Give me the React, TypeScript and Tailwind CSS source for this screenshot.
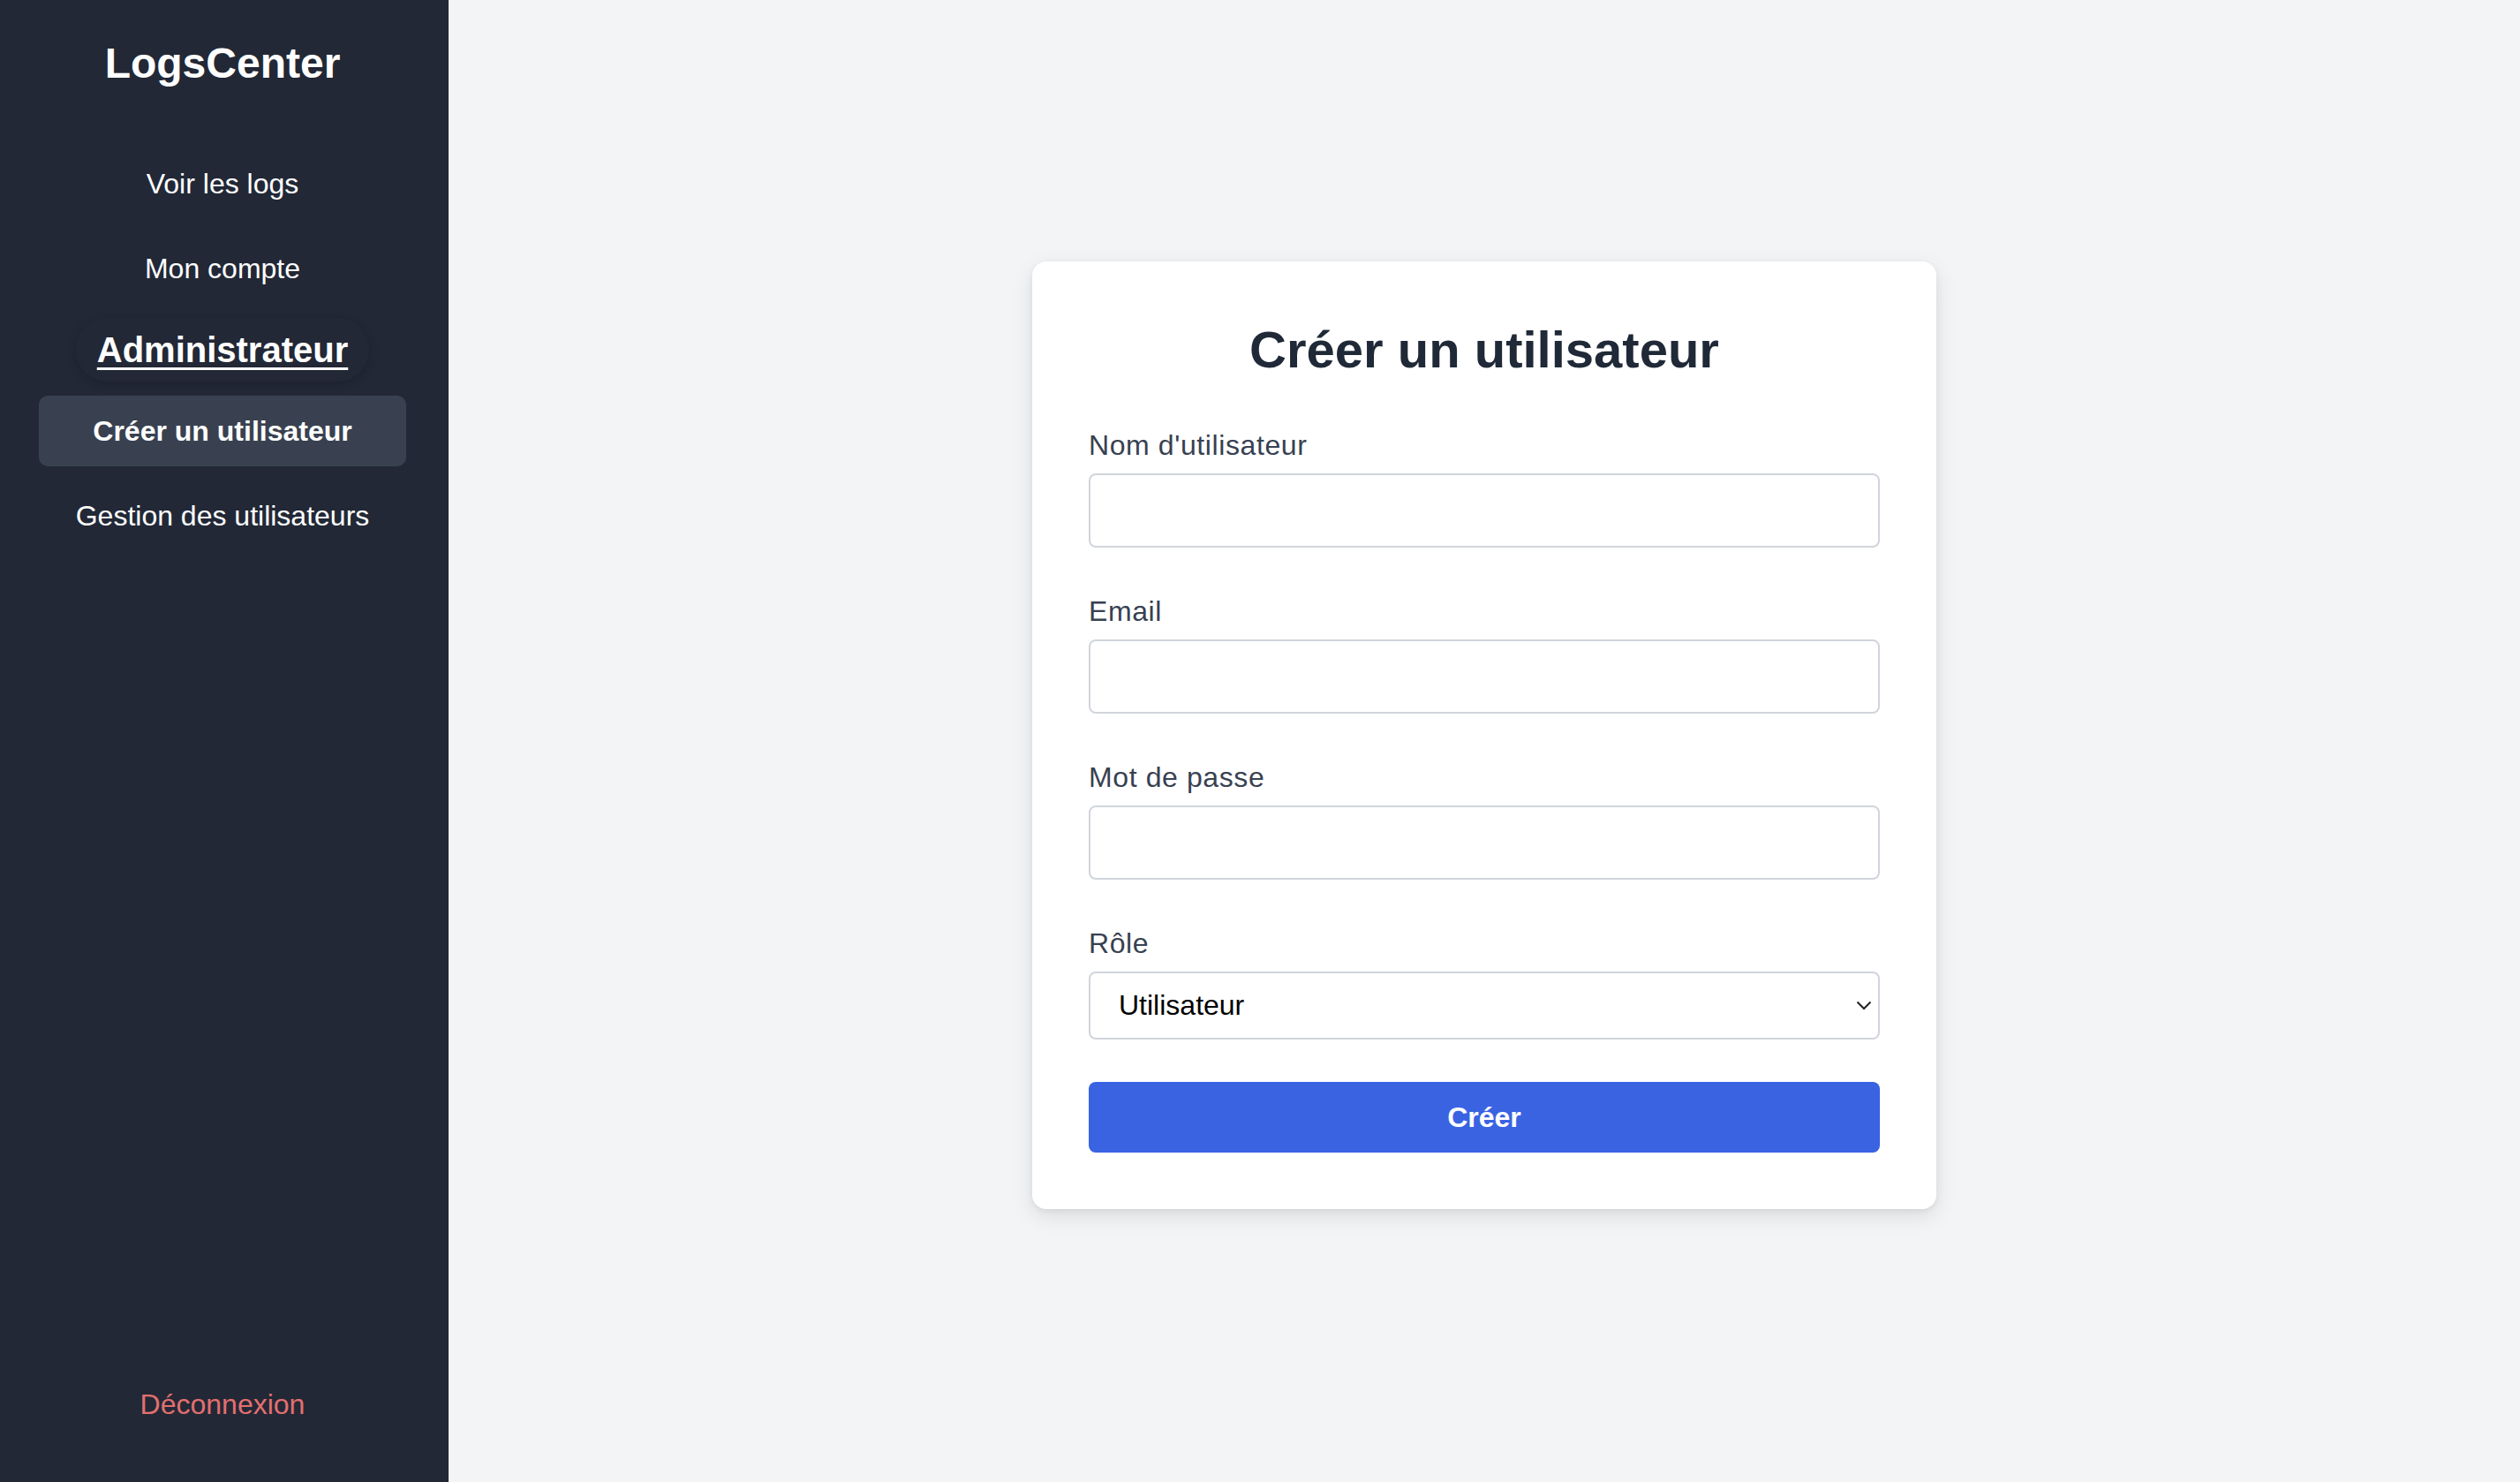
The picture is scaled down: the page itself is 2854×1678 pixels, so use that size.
import { useState } from "react";

const navLinks = ["Voir les logs", "Mon compte"];
const adminLinks = [
  { label: "Créer un utilisateur", active: true },
  { label: "Gestion des utilisateurs", active: false },
];

const Field = ({ label, type }: { label: string; type: string }) => (
  <div className="mb-12">
    <label className="mb-2 block text-[32px] leading-[48px] font-medium tracking-[0.6px] text-[#374151]">
      {label}
    </label>
    <input
      type={type}
      className="block h-[84px] w-full rounded-[8px] border-2 border-[#d1d5db] bg-white px-8 text-[32px] outline-none"
    />
  </div>
);

const App = () => {
  const [role, setRole] = useState("user");

  return (
    <div
      className="flex h-screen w-full overflow-hidden bg-[#f3f4f6]"
      style={{ fontFamily: '"Liberation Sans", Arial, sans-serif' }}
    >
      <aside className="flex w-[508px] shrink-0 flex-col bg-[#222836] pt-10 pr-12 pb-12 pl-11 text-white">
        <div className="text-center text-[48px] leading-[64px] font-bold">LogsCenter</div>

        <nav className="mt-16 flex flex-col gap-4">
          {navLinks.map((l) => (
            <a key={l} className="block py-4 text-center text-[32px] leading-[48px]">
              {l}
            </a>
          ))}
          <div className="flex justify-center">
            <span className="rounded-full px-6 py-2 text-[40px] leading-[56px] font-bold underline decoration-[3px] underline-offset-[6px] shadow-[0_3px_12px_rgba(0,0,0,0.18)]">
              Administrateur
            </span>
          </div>
          {adminLinks.map((l) => (
            <a
              key={l.label}
              className={
                l.active
                  ? "block rounded-[10px] bg-[#394150] py-4 text-center text-[32px] leading-[48px] font-bold"
                  : "block py-4 text-center text-[32px] leading-[48px]"
              }
            >
              {l.label}
            </a>
          ))}
        </nav>

        <div className="mt-auto">
          <a className="block py-4 text-center text-[32px] leading-[48px] text-[#e36f6f]">Déconnexion</a>
        </div>
      </aside>

      <main className="flex flex-1 items-center justify-center pb-[14px]">
        <div className="w-[1024px] rounded-[16px] bg-white p-16 shadow-[0_8px_24px_rgba(0,0,0,0.10),0_2px_6px_rgba(0,0,0,0.06)]">
          <h2 className="mb-12 text-center text-[58px] leading-[72px] font-bold text-[#1f2937]">
            Créer un utilisateur
          </h2>

          <Field label="Nom d'utilisateur" type="text" />
          <Field label="Email" type="email" />
          <Field label="Mot de passe" type="password" />

          <div className="mb-12">
            <label className="mb-2 block text-[32px] leading-[48px] font-medium tracking-[0.6px] text-[#374151]">
              Rôle
            </label>
            <div className="relative">
              <select
                value={role}
                onChange={(e) => setRole(e.target.value)}
                className="block h-[77px] w-full appearance-none rounded-[8px] border-2 border-[#d1d5db] bg-white px-8 text-[32px] text-black outline-none"
              >
                <option value="user">Utilisateur</option>
                <option value="admin">Administrateur</option>
              </select>
              <svg
                className="pointer-events-none absolute top-1/2 right-[9px] -translate-y-1/2"
                width="18"
                height="12"
                viewBox="0 0 18 12"
                fill="none"
              >
                <path d="M1.5 2.5 L9 10 L16.5 2.5" stroke="#222" strokeWidth="2" />
              </svg>
            </div>
          </div>

          <button className="block h-[80px] w-full rounded-[8px] bg-[#3a63e2] text-[32px] font-bold text-white">
            Créer
          </button>
        </div>
      </main>
    </div>
  );
};

export default App;
